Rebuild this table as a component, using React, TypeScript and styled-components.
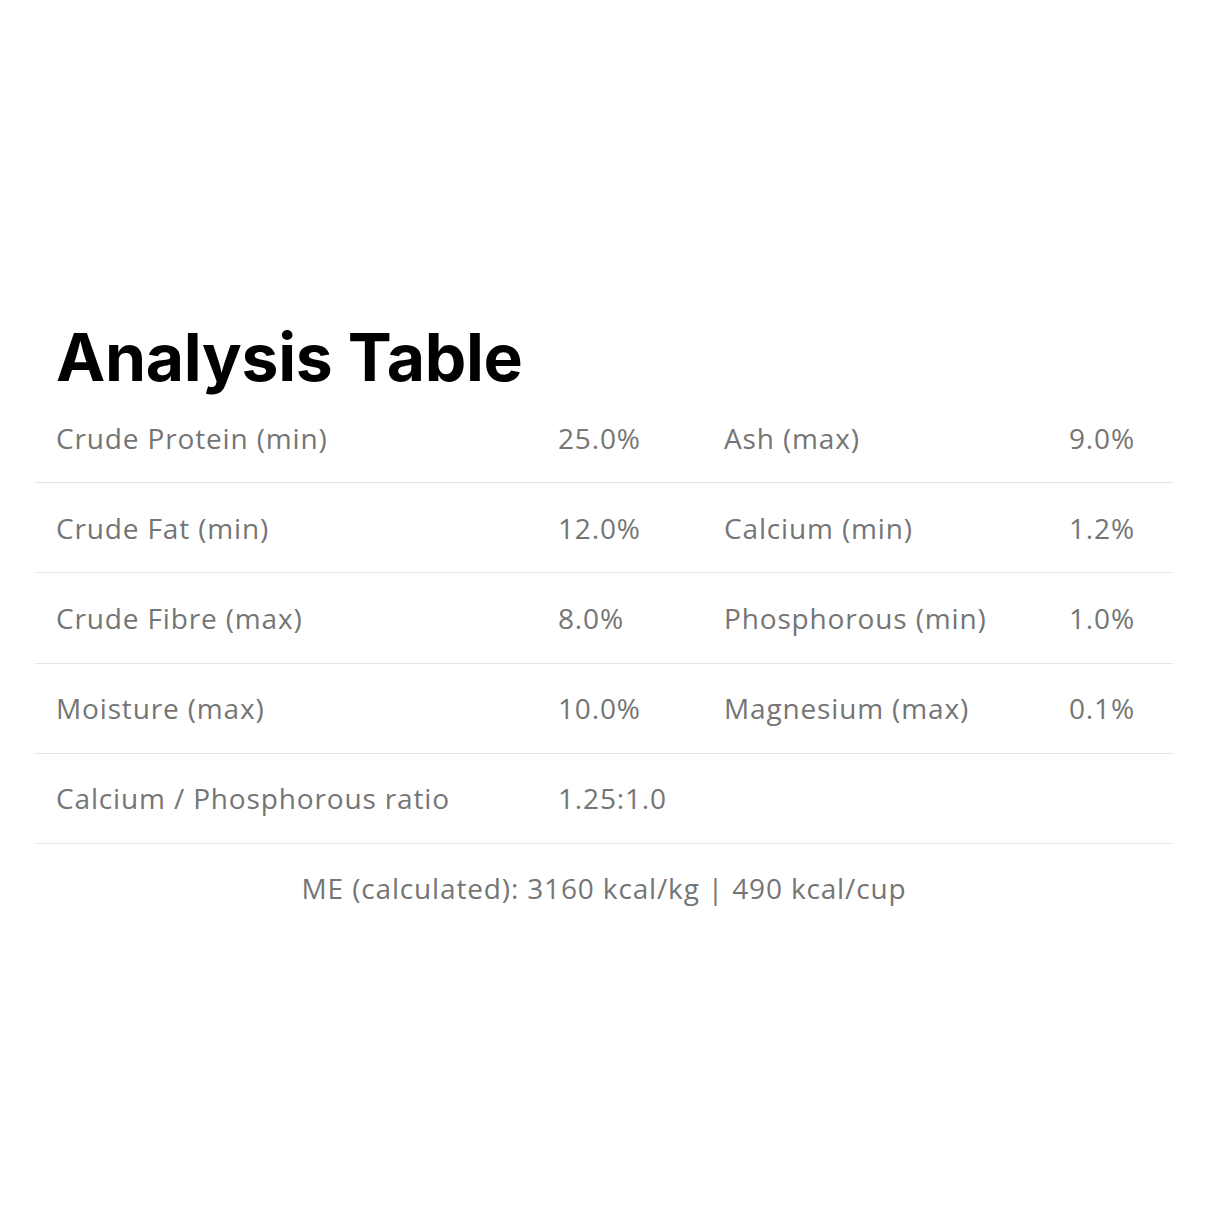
import React from "react";
import styled, { createGlobalStyle } from "styled-components";

const Global = createGlobalStyle`
  html, body { margin: 0; padding: 0; background: #ffffff; }
  body { font-family: "Open Sans", "Noto Sans", sans-serif; }
`;

const Page = styled.div`
  width: 1214px;
  height: 1214px;
  box-sizing: border-box;
  padding: 321px 41px 0 35px;
`;

const Title = styled.h1`
  margin: 0 0 0 21px;
  font-family: "Inter", "Noto Sans", sans-serif;
  font-weight: 700;
  font-size: 66px;
  line-height: 72px;
  color: #000;
  letter-spacing: -0.3px;
`;

const Row = styled.div`
  display: grid;
  grid-template-columns: 502px 166px 345px 1fr;
  align-items: center;
  box-sizing: border-box;
  height: 90.2px;
  padding-left: 21px;
  border-bottom: 1.5px solid #e4e4e4;
`;

const Cell = styled.div`
  font-family: "Open Sans", sans-serif;
  font-size: 28px;
  letter-spacing: 0.85px;
  color: #757575;
  white-space: nowrap;
`;

const Footer = styled.div`
  text-align: center;
  padding-top: 25px;
  font-family: "Open Sans", sans-serif;
  font-size: 28px;
  letter-spacing: 0.85px;
  color: #757575;
`;

const rows: [string, string, string, string][] = [
  ["Crude Protein (min)", "25.0%", "Ash (max)", "9.0%"],
  ["Crude Fat (min)", "12.0%", "Calcium (min)", "1.2%"],
  ["Crude Fibre (max)", "8.0%", "Phosphorous (min)", "1.0%"],
  ["Moisture (max)", "10.0%", "Magnesium (max)", "0.1%"],
  ["Calcium / Phosphorous ratio", "1.25:1.0", "", ""],
];

export default function App() {
  return (
    <>
      <Global />
      <Page>
        <Title>Analysis Table</Title>
        {rows.map((r, i) => (
          <Row key={i}>
            {r.map((c, j) => (
              <Cell key={j}>{c}</Cell>
            ))}
          </Row>
        ))}
        <Footer>ME (calculated): 3160 kcal/kg | 490 kcal/cup</Footer>
      </Page>
    </>
  );
}
